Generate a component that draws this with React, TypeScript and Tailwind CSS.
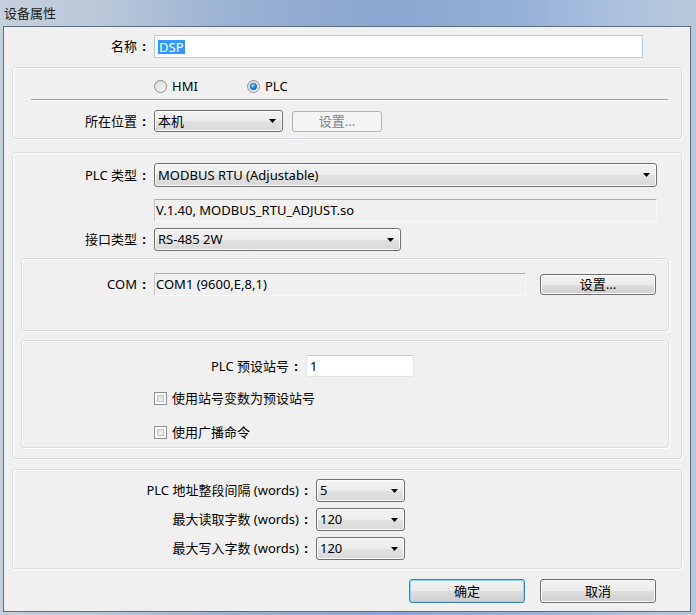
import React from "react";

const Tri = () => (
  <svg width="7" height="4" viewBox="0 0 7 4" className="shrink-0">
    <polygon points="0,0 7,0 3.5,4" fill="#000" />
  </svg>
);

const Label = ({ cls, text }: { cls: string; text: string }) => (
  <div className={"flex justify-end items-center shrink-0 " + cls}>
    <span className="leading-none">{text}</span>
    <span className="w-[14px] text-center font-bold leading-none">:</span>
  </div>
);

const Select = ({ cls, text }: { cls: string; text: string }) => (
  <div
    className={
      "flex items-center justify-between rounded-[3px] border border-[#707070] bg-[linear-gradient(#f3f3f3,#ececec_50%,#e1e1e1_51%,#d9d9d9)] pl-[3px] pr-[6px] shadow-[inset_0_0_0_1px_#fbfbfb] " +
      cls
    }
  >
    <span className="leading-none">{text}</span>
    <Tri />
  </div>
);

const Btn = ({ cls, text, disabled, def }: { cls: string; text: string; disabled?: boolean; def?: boolean }) => (
  <div
    className={
      "flex items-center justify-center rounded-[3px] border " +
      (disabled
        ? "border-[#adb2b5] bg-[#f4f4f4] text-[#838383] "
        : def
        ? "border-[#3c7fb1] bg-[linear-gradient(#f2f2f2,#ebebeb_50%,#dddddd_51%,#cfcfcf)] shadow-[inset_0_0_0_1px_#8fd6f6] "
        : "border-[#707070] bg-[linear-gradient(#f2f2f2,#ebebeb_50%,#dddddd_51%,#cfcfcf)] shadow-[inset_0_0_0_1px_#fcfcfc] ") +
      cls
    }
  >
    <span className="leading-none">{text}</span>
  </div>
);

const Radio = ({ checked }: { checked?: boolean }) => (
  <svg width="13" height="13" viewBox="0 0 13 13" className="shrink-0">
    <defs>
      <linearGradient id={checked ? "rg1" : "rg0"} x1="0" y1="0" x2="1" y2="1">
        <stop offset="0" stopColor="#d4d4d4" />
        <stop offset="1" stopColor="#fcfcfc" />
      </linearGradient>
      <radialGradient id="dot" cx="0.4" cy="0.35" r="0.7">
        <stop offset="0" stopColor="#9bdcfb" />
        <stop offset="0.5" stopColor="#2d8fd8" />
        <stop offset="1" stopColor="#0d4f8f" />
      </radialGradient>
    </defs>
    <circle cx="6.5" cy="6.5" r="6" fill={`url(#${checked ? "rg1" : "rg0"})`} stroke="#8e8f8f" strokeWidth="1" />
    {checked && <circle cx="6.5" cy="6.5" r="3.3" fill="url(#dot)" stroke="#27609a" strokeWidth="0.6" />}
  </svg>
);

const Check = () => (
  <div className="w-[13px] h-[13px] shrink-0 border border-[#8e8f8f] bg-white p-[2px]">
    <div className="w-full h-full border border-[#c6c6c6] bg-linear-to-br from-[#d9d9d9] to-[#f7f7f7]" />
  </div>
);

const Group = ({ cls, children }: { cls: string; children: React.ReactNode }) => (
  <div className={"flex flex-col rounded-[3px] border border-[#d5dfe5] shadow-[inset_1px_1px_0_#ffffff,1px_1px_0_#ffffff] " + cls}>
    {children}
  </div>
);

const Field = ({ cls, text }: { cls: string; text: string }) => (
  <div className={"flex items-center border border-t-[#adadad] border-l-[#c8c8c8] border-r-[#f8f8f8] border-b-[#f8f8f8] bg-[#f0f0f0] pl-[1px] " + cls}>
    <span className="leading-none">{text}</span>
  </div>
);

export default function App() {
  return (
    <div className="w-[696px] h-[615px] flex flex-col overflow-hidden bg-[linear-gradient(90deg,#c6d0dc_0%,#b9c7d9_15%,#98b0d2_35%,#8aa6d0_55%,#96b1d8_75%,#aec2de_90%,#b9c9dc_100%)] font-['Noto_Sans','Noto_Sans_CJK_SC',sans-serif] text-[13px] text-black">
      <div className="h-[26px] flex items-center pl-[4px] text-[#1b1b1b]">
        <span className="leading-none">设备属性</span>
      </div>
      <div className="flex pl-[3px]">
        <div className="w-[688px] h-[586px] border border-[#5d6b7e] bg-[#f0f0f0] flex flex-col">
          {/* name row */}
          <div className="mt-[8px] flex items-center h-[23px]">
            <Label cls="w-[147px]" text="名称" />
            <div className="ml-[3px] w-[489px] h-[23px] border border-[#aecbe6] bg-white flex items-center pl-[3px]">
              <span className="bg-[#3399ff] text-white leading-[14px] px-[1px]">DSP</span>
            </div>
          </div>

          {/* group 1 */}
          <Group cls="mt-[9px] ml-[8px] w-[670px] h-[72px]">
            <div className="mt-[12px] h-[13px] flex items-center pl-[141px]">
              <div className="w-[93px] flex items-center">
                <Radio />
                <span className="ml-[5px] leading-none">HMI</span>
              </div>
              <div className="flex items-center">
                <Radio checked />
                <span className="ml-[5px] leading-none">PLC</span>
              </div>
            </div>
            <div className="mt-[6px] ml-[18px] w-[637px] h-[2px] border-t border-t-[#a0a0a0] border-b border-b-white" />
            <div className="mt-[9px] flex items-center h-[22px]">
              <Label cls="w-[138px]" text="所在位置" />
              <Select cls="ml-[3px] w-[129px] h-[22px]" text="本机" />
              <Btn cls="ml-[9px] w-[90px] h-[21px]" text="设置..." disabled />
            </div>
          </Group>

          {/* group 2 */}
          <Group cls="mt-[13px] ml-[8px] w-[670px] h-[307px]">
            <div className="mt-[10px] flex items-center h-[24px]">
              <Label cls="w-[138px]" text="PLC 类型" />
              <Select cls="ml-[3px] w-[503px] h-[24px]" text="MODBUS RTU (Adjustable)" />
            </div>
            <Field cls="mt-[12px] ml-[141px] w-[503px] h-[23px]" text="V.1.40, MODBUS_RTU_ADJUST.so" />
            <div className="mt-[6px] flex items-center h-[23px]">
              <Label cls="w-[138px]" text="接口类型" />
              <Select cls="ml-[3px] w-[247px] h-[23px]" text="RS-485 2W" />
            </div>

            <Group cls="mt-[7px] ml-[8px] w-[648px] h-[73px]">
              <div className="mt-[14px] flex items-center h-[23px]">
                <Label cls="w-[129px]" text="COM" />
                <Field cls="ml-[3px] w-[372px] h-[23px]" text="COM1 (9600,E,8,1)" />
                <Btn cls="ml-[14px] w-[116px] h-[21px]" text="设置..." />
              </div>
            </Group>

            <Group cls="mt-[9px] ml-[8px] w-[648px] h-[108px]">
              <div className="mt-[14px] flex items-center h-[22px]">
                <Label cls="w-[281px]" text="PLC 预设站号" />
                <div className="ml-[3px] w-[108px] h-[22px] border border-[#dde3e9] border-t-[#c6cbd1] bg-white flex items-center pl-[3px]">
                  <span className="leading-none">1</span>
                </div>
              </div>
              <div className="mt-[13px] h-[17px] flex items-center pl-[132px]">
                <Check />
                <span className="ml-[5px] leading-none">使用站号变数为预设站号</span>
              </div>
              <div className="mt-[17px] h-[17px] flex items-center pl-[132px]">
                <Check />
                <span className="ml-[5px] leading-none">使用广播命令</span>
              </div>
            </Group>
          </Group>

          {/* group 3 */}
          <Group cls="mt-[10px] ml-[8px] w-[670px] h-[100px]">
            <div className="mt-[9px] flex flex-col gap-[6px]">
              <div className="flex items-center h-[23px]">
                <Label cls="w-[300px]" text="PLC 地址整段间隔 (words)" />
                <Select cls="ml-[3px] w-[89px] h-[23px]" text="5" />
              </div>
              <div className="flex items-center h-[23px]">
                <Label cls="w-[300px]" text="最大读取字数 (words)" />
                <Select cls="ml-[3px] w-[89px] h-[23px]" text="120" />
              </div>
              <div className="flex items-center h-[23px]">
                <Label cls="w-[300px]" text="最大写入字数 (words)" />
                <Select cls="ml-[3px] w-[89px] h-[23px]" text="120" />
              </div>
            </div>
          </Group>

          {/* buttons */}
          <div className="mt-[10px] flex pl-[405px]">
            <Btn cls="w-[116px] h-[24px]" text="确定" def />
            <Btn cls="ml-[15px] w-[116px] h-[24px]" text="取消" />
          </div>
        </div>
      </div>
    </div>
  );
}
